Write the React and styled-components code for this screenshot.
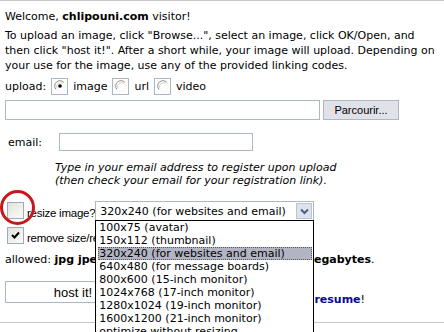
import React from "react";
import styled, { createGlobalStyle } from "styled-components";

const GlobalStyle = createGlobalStyle`
  body {
    margin: 0;
    background: #fff;
    font-family: "DejaVu Sans", Verdana, sans-serif;
    font-size: 11px;
    color: #000;
  }
`;

const Page = styled.div`
  position: relative;
  width: 444px;
  height: 332px;
  overflow: hidden;
  border-top: 1px solid #c8c8c8;
  box-sizing: border-box;
  padding: 8px 5px 0 5px;
`;

const Para = styled.p`
  margin: ${(p) => p.$mt || 0}px 0 0 0;
  line-height: 15px;
`;

const Row = styled.div`
  display: flex;
  align-items: center;
  gap: ${(p) => p.$gap || 4}px;
  margin-top: ${(p) => p.$mt || 0}px;
  padding-left: ${(p) => p.$pl || 0}px;
`;

const RadioBox = styled.span`
  width: 17px;
  height: 17px;
  box-sizing: border-box;
  border: 1px solid #a9b8c6;
  display: inline-flex;
  align-items: flex-start;
  justify-content: center;
  padding-top: 1px;
  background: #fff;
`;

const FileField = styled.div`
  width: 315px;
  height: 20px;
  box-sizing: border-box;
  border: 1px solid #a9b8c6;
  background: #fff;
`;

const BrowseButton = styled.div`
  width: 76px;
  height: 20px;
  box-sizing: border-box;
  border: 1px solid #a9b8c6;
  background: #e1e1e8;
  font-family: "Liberation Sans", Arial, sans-serif;
  font-size: 11px;
  display: flex;
  align-items: center;
  justify-content: center;
`;

const Label = styled.span`
  width: ${(p) => p.$w || "auto"};
`;

const EmailField = styled.div`
  width: 194px;
  height: 18px;
  box-sizing: border-box;
  border: 1px solid #a9b8c6;
  background: #fff;
`;

const Note = styled.p`
  margin: 10px 0 0 50px;
  font-style: italic;
  line-height: 13px;
`;

const CheckRow = styled.div`
  display: flex;
  align-items: flex-start;
  margin-top: ${(p) => p.$mt || 0}px;
  padding-left: 2px;
  height: ${(p) => p.$h || 17}px;
`;

const CheckBox = styled.span`
  position: relative;
  width: 17px;
  height: 17px;
  box-sizing: border-box;
  border: 1px solid #9aacbf;
  background: linear-gradient(135deg, #e3e3dc, #fbfbf8);
  display: inline-flex;
  align-items: center;
  justify-content: center;
`;

const RedRing = styled.span`
  position: absolute;
  left: -8px;
  top: -13px;
  width: 29px;
  height: 29px;
  border: 3px solid #c8171c;
  border-radius: 50%;
  pointer-events: none;
`;

const SmallText = styled.span`
  font-family: "Liberation Sans", Arial, sans-serif;
  font-size: 11.5px;
  letter-spacing: -0.25px;
  margin-left: 3px;
  margin-top: ${(p) => p.$mt || 4}px;
  white-space: nowrap;
`;

const SelectWrap = styled.div`
  position: relative;
  margin-left: 0;
  margin-top: -1px;
`;

const SelectBox = styled.div`
  width: 219px;
  height: 20px;
  box-sizing: border-box;
  border: 1px solid #a9b8c6;
  background: #fff;
  display: flex;
  align-items: center;
  justify-content: space-between;
  padding: 0 1px 0 4px;
  font-size: 11px;
`;

const ArrowBtn = styled.span`
  width: 16px;
  height: 16px;
  box-sizing: border-box;
  border: 1px solid #b9c3d3;
  background: #dde2ee;
  display: inline-flex;
  align-items: center;
  justify-content: center;
`;

const DropList = styled.ul`
  position: absolute;
  left: 0;
  top: 19px;
  width: 219px;
  height: 130px;
  box-sizing: border-box;
  margin: 0;
  padding: 0 0 0 2px;
  list-style: none;
  border: 1px solid #000;
  background: #fff;
  z-index: 5;
  font-size: 11px;
  overflow: hidden;
`;

const DropItem = styled.li`
  height: 13px;
  line-height: 13px;
  padding-left: 1px;
  white-space: nowrap;
  background: ${(p) => (p.$active ? "#b3b4c3" : "transparent")};
  outline: ${(p) => (p.$active ? "1px dotted #555" : "none")};
  outline-offset: -1px;
  margin-right: 1px;
`;

const Allowed = styled.p`
  margin: 8px 0 0 0;
  line-height: 15px;
  white-space: nowrap;
`;

const BottomRow = styled.div`
  display: flex;
  align-items: flex-start;
  margin-top: 14px;
`;

const HostButton = styled.div`
  width: 134px;
  height: 22px;
  box-sizing: border-box;
  border: 1px solid #a9b8c6;
  background: #fff;
  font-family: "Liberation Sans", Arial, sans-serif;
  font-size: 13px;
  display: flex;
  align-items: center;
  justify-content: center;
  padding-left: 2px;
`;

const Resume = styled.span`
  margin-left: auto;
  margin-right: 74px;
  margin-top: 12px;
  white-space: nowrap;
  b {
    color: #0a0a8c;
  }
`;

const Rule = styled.div`
  height: 1px;
  background: #c8c8c8;
  margin: 16px -5px 0 -5px;
`;

function Radio({ checked }) {
  return (
    <svg width="12" height="12" viewBox="0 0 12 12">
      <path d="M10 2.5 A5 5 0 0 0 2 9.5" fill="none" stroke="#8a8a86" strokeWidth="1" />
      <path d="M2 9.5 A5 5 0 0 0 10 2.5" fill="none" stroke="#f4f4f0" strokeWidth="1" />
      <circle cx="6" cy="6" r="4" fill="#fff" />
      <path d="M9 3.5 A4 4 0 0 0 3 8.5" fill="none" stroke="#d4d0c8" strokeWidth="1" />
      {checked && <circle cx="6" cy="6" r="1.8" fill="#000" />}
    </svg>
  );
}

function Check() {
  return (
    <svg width="11" height="11" viewBox="0 0 11 11">
      <path d="M2 5 L4.5 7.5 L9 2.5" fill="none" stroke="#000" strokeWidth="2" />
    </svg>
  );
}

const sizes = [
  "100x75 (avatar)",
  "150x112 (thumbnail)",
  "320x240 (for websites and email)",
  "640x480 (for message boards)",
  "800x600 (15-inch monitor)",
  "1024x768 (17-inch monitor)",
  "1280x1024 (19-inch monitor)",
  "1600x1200 (21-inch monitor)",
  "optimize without resizing",
];

export default function App() {
  return (
    <>
      <GlobalStyle />
      <Page>
        <Para>
          Welcome, <b>chlipouni.com</b> visitor!
        </Para>
        <Para $mt={4}>
          To upload an image, click "Browse...", select an image, click OK/Open, and then click "host it!". After a
          short while, your image will upload. Depending on your use for the image, use any of the provided linking
          codes.
        </Para>
        <Row $mt={5} $gap={5}>
          <span>upload:</span>
          <RadioBox>
            <Radio checked />
          </RadioBox>
          <span>image</span>
          <RadioBox>
            <Radio />
          </RadioBox>
          <span>url</span>
          <RadioBox>
            <Radio />
          </RadioBox>
          <span>video</span>
        </Row>
        <Row $mt={5} $gap={3}>
          <FileField />
          <BrowseButton>Parcourir...</BrowseButton>
        </Row>
        <Row $mt={13} $gap={0} $pl={3}>
          <Label $w="47px">email:</Label>
          <EmailField />
        </Row>
        <Note>
          Type in your email address to register upon upload
          <br />
          (then check your email for your registration link).
        </Note>
        <CheckRow $mt={15} $h={20}>
          <CheckBox>
            <RedRing />
          </CheckBox>
          <SmallText $mt={5}>resize image?</SmallText>
          <SelectWrap>
            <SelectBox>
              <span>320x240 (for websites and email)</span>
              <ArrowBtn>
                <svg width="9" height="7" viewBox="0 0 9 7">
                  <path d="M1 1.5 L4.5 5 L8 1.5" fill="none" stroke="#4d6185" strokeWidth="2" />
                </svg>
              </ArrowBtn>
            </SelectBox>
            <DropList>
              {sizes.map((s) => (
                <DropItem key={s} $active={s.startsWith("320")}>
                  {s}
                </DropItem>
              ))}
            </DropList>
          </SelectWrap>
        </CheckRow>
        <CheckRow $mt={5}>
          <CheckBox>
            <Check />
          </CheckBox>
          <SmallText $mt={5}>remove size/resolution bar from thumbnail?</SmallText>
        </CheckRow>
        <Allowed>
          allowed: <b>jpg jpeg png gif bmp</b>, max. upload size: <b>3 megabytes</b>.
        </Allowed>
        <BottomRow>
          <HostButton>host it!</HostButton>
          <Resume>
            or <b>resume</b>!
          </Resume>
        </BottomRow>
        <Rule />
      </Page>
    </>
  );
}
